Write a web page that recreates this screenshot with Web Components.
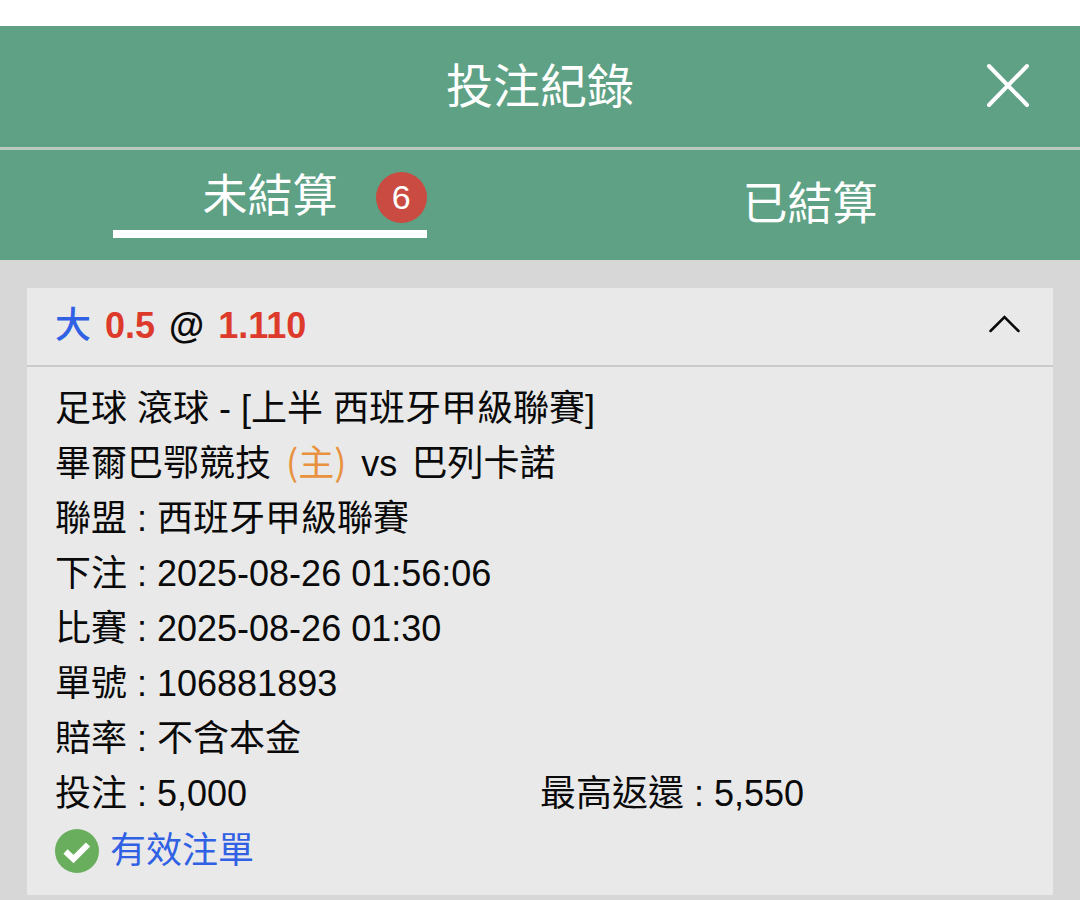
<!DOCTYPE html>
<html lang="zh-Hant">
<head>
<meta charset="utf-8">
<meta name="viewport" content="width=device-width, initial-scale=1">
<title>投注紀錄</title>
<style>
  :root {
    --green: #5ea185;
    --page: #d7d7d7;
    --card: #e9e9e9;
    --blue: #3060e4;
    --red: #dd3a2c;
    --orange: #e8923f;
  }
  body {
    margin: 0;
    background: var(--page);
    color: #0a0a0a;
    font-family: "Liberation Sans", "Noto Sans CJK TC", sans-serif;
    font-size: 36px;
    font-weight: 400;
  }
  .home { color: var(--orange); font-family: "Noto Sans CJK TC", sans-serif; line-height: 1; margin: 0 5px; }
  .rival { margin-left: 4px; }
  .pick { color: var(--blue); font-weight: 500; }
  .odds { color: var(--red); }
</style>
</head>
<body>
<bet-records>
  <record-header slot="header">投注紀錄</record-header>
  <record-tabs slot="tabs">
    <record-tab active count="6">未結算</record-tab>
    <record-tab>已結算</record-tab>
  </record-tabs>
  <bet-card>
    <span slot="title" class="pick">大</span>
    <span slot="title" class="odds">0.5</span>
    <span slot="title">@</span>
    <span slot="title" class="odds">1.110</span>
    <bet-row>足球 滾球 - [上半 西班牙甲級聯賽]</bet-row>
    <bet-row>畢爾巴鄂競技 <span class="home">(主)</span> vs <span class="rival">巴列卡諾</span></bet-row>
    <bet-row>聯盟 : 西班牙甲級聯賽</bet-row>
    <bet-row>下注 : 2025-08-26 01:56:06</bet-row>
    <bet-row>比賽 : 2025-08-26 01:30</bet-row>
    <bet-row>單號 : 106881893</bet-row>
    <bet-row>賠率 : 不含本金</bet-row>
    <bet-row split>投注 : 5,000<span slot="second">最高返還 : 5,550</span></bet-row>
    <bet-status>有效注單</bet-status>
  </bet-card>
</bet-records>

<script>
  const define = (name, html, setup) => {
    const template = document.createElement('template');
    template.innerHTML = html;
    customElements.define(name, class extends HTMLElement {
      constructor() {
        super();
        this.attachShadow({ mode: 'open' }).append(template.content.cloneNode(true));
      }
      connectedCallback() {
        if (setup) setup(this, this.shadowRoot);
      }
    });
  };

  define('bet-records', `
    <style>
      :host { display: block; border-top: 26px solid #fff; }
      .top { background: var(--green); color: #fff; }
      main { padding: 28px 27px 5px; }
    </style>
    <div class="top"><slot name="header"></slot><slot name="tabs"></slot></div>
    <main><slot></slot></main>
  `);

  define('record-header', `
    <style>
      :host {
        display: grid;
        grid-template-columns: 1fr auto 1fr;
        align-items: center;
        height: 121px;
        padding: 0 48px;
        border-bottom: 3px solid #b9cbc1;
      }
      h1 { grid-column: 2; margin: 0; font-size: 47px; line-height: 64px; font-weight: inherit; }
      button {
        justify-self: end;
        display: block;
        margin-bottom: 2px;
        padding: 0;
        border: 0;
        background: none;
        color: inherit;
        cursor: pointer;
      }
      svg { display: block; }
    </style>
    <h1><slot></slot></h1>
    <button type="button" aria-label="關閉">
      <svg width="48" height="48" viewBox="0 0 48 48" fill="none" stroke="currentColor" stroke-width="4" stroke-linecap="round">
        <path d="M5 4 43 43M43 4 5 43"/>
      </svg>
    </button>
  `);

  define('record-tabs', `
    <style>
      :host { display: grid; grid-template-columns: 1fr 1fr; height: 110px; }
    </style>
    <slot></slot>
  `);

  define('record-tab', `
    <style>
      :host { display: flex; justify-content: center; align-items: center; }
      :host([active]) { padding-bottom: 8px; }
      button {
        position: relative;
        box-sizing: border-box;
        width: 58%;
        padding: 0;
        border: 0;
        background: none;
        color: inherit;
        font-family: inherit;
        font-size: 45px;
        font-weight: inherit;
        line-height: 66px;
        cursor: pointer;
      }
      :host([active]) button { border-bottom: 8px solid #fff; }
      .badge {
        position: absolute;
        right: 0;
        top: 8px;
        width: 51px;
        height: 51px;
        border-radius: 50%;
        background: #c94b41;
        font-size: 34px;
        line-height: 50px;
      }
      .badge:empty { display: none; }
    </style>
    <button type="button"><slot></slot><span class="badge"></span></button>
  `, (host, root) => {
    root.querySelector('.badge').textContent = host.getAttribute('count') || '';
  });

  define('bet-card', `
    <style>
      :host { display: block; background: var(--card); }
      button {
        display: flex;
        align-items: center;
        gap: 14px;
        width: 100%;
        height: 77px;
        padding: 0 28px 2px;
        border: 0;
        background: none;
        color: inherit;
        font: inherit;
        font-weight: 700;
        line-height: 55px;
        cursor: pointer;
      }
      svg { display: block; margin-left: auto; }
      .body { border-top: 2px solid #cacaca; padding: 14px 28px 16px; }
      .body[hidden] { display: none; }
    </style>
    <button type="button" aria-expanded="true">
      <slot name="title"></slot>
      <svg width="40" height="40" viewBox="0 0 40 40" fill="none" stroke="currentColor" stroke-width="2.5" stroke-linecap="round" aria-hidden="true">
        <path d="M5.500 25 19.500 11 33.500 25"/>
      </svg>
    </button>
    <div class="body"><slot></slot></div>
  `, (host, root) => {
    const button = root.querySelector('button');
    const body = root.querySelector('.body');
    button.addEventListener('click', () => {
      body.hidden = !body.hidden;
      button.setAttribute('aria-expanded', String(!body.hidden));
    });
  });

  define('bet-row', `
    <style>
      :host { display: grid; grid-template-columns: 1fr; line-height: 55px; }
      :host([split]) { grid-template-columns: 1fr 1fr; }
    </style>
    <div><slot></slot></div><slot name="second"></slot>
  `);

  define('bet-status', `
    <style>
      :host { display: flex; align-items: center; gap: 11px; padding-top: 2px; line-height: 56px; color: var(--blue); }
      svg { display: block; }
    </style>
    <svg width="44" height="44" viewBox="0 0 44 44" aria-hidden="true">
      <circle cx="22" cy="22" r="22" fill="#69ae5c"/>
      <path d="M10.500 22.500 18.500 30 33 15.500" fill="none" stroke="#fff" stroke-width="6"/>
    </svg>
    <span><slot></slot></span>
  `);
</script>
</body>
</html>
